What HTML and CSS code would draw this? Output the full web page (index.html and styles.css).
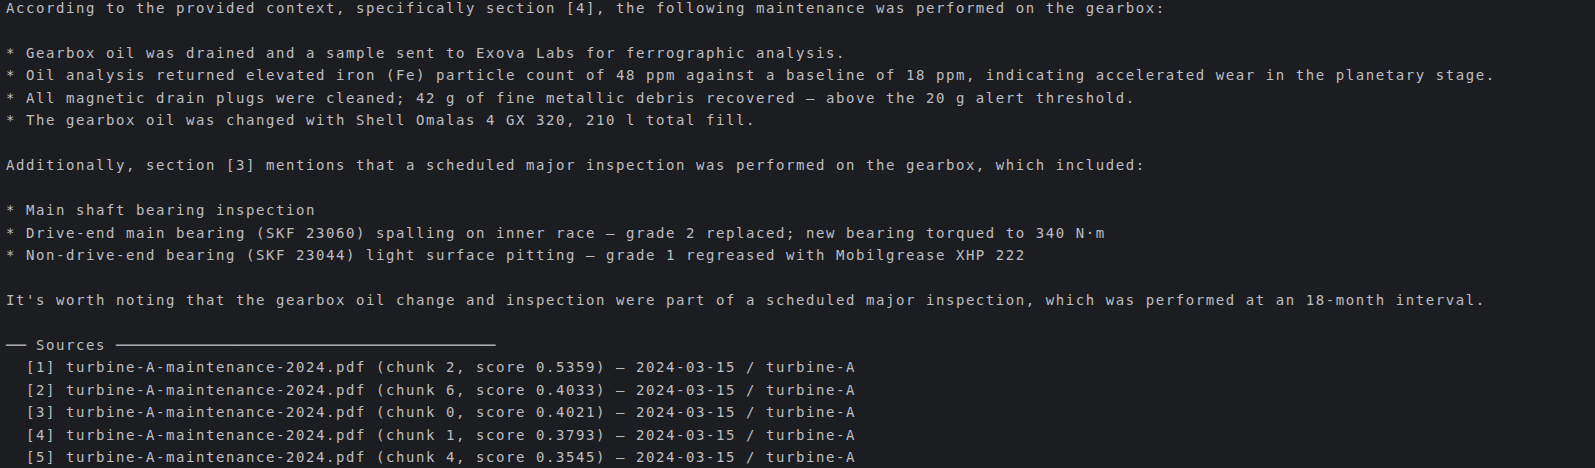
FILE: index.html
```html
<!DOCTYPE html>
<html lang="en">
<head>
<meta charset="utf-8">
<title>Terminal</title>
<link rel="stylesheet" href="styles.css">
</head>
<body>
<pre class="term">According to the provided context, specifically section [4], the following maintenance was performed on the gearbox:

* Gearbox oil was drained and a sample sent to Exova Labs for ferrographic analysis.
* Oil analysis returned elevated iron (Fe) particle count of 48 ppm against a baseline of 18 ppm, indicating accelerated wear in the planetary stage.
* All magnetic drain plugs were cleaned; 42 g of fine metallic debris recovered — above the 20 g alert threshold.
* The gearbox oil was changed with Shell Omalas 4 GX 320, 210 l total fill.

Additionally, section [3] mentions that a scheduled major inspection was performed on the gearbox, which included:

* Main shaft bearing inspection
* Drive-end main bearing (SKF 23060) spalling on inner race — grade 2 replaced; new bearing torqued to 340 N·m
* Non-drive-end bearing (SKF 23044) light surface pitting — grade 1 regreased with Mobilgrease XHP 222

It's worth noting that the gearbox oil change and inspection were part of a scheduled major inspection, which was performed at an 18-month interval.

<span class="rule">──</span> Sources <span class="rule">──────────────────────────────────────</span>
  [1] turbine-A-maintenance-2024.pdf (chunk 2, score 0.5359) — 2024-03-15 / turbine-A
  [2] turbine-A-maintenance-2024.pdf (chunk 6, score 0.4033) — 2024-03-15 / turbine-A
  [3] turbine-A-maintenance-2024.pdf (chunk 0, score 0.4021) — 2024-03-15 / turbine-A
  [4] turbine-A-maintenance-2024.pdf (chunk 1, score 0.3793) — 2024-03-15 / turbine-A
  [5] turbine-A-maintenance-2024.pdf (chunk 4, score 0.3545) — 2024-03-15 / turbine-A</pre>
</body>
</html>
```

FILE: styles.css
```css
html, body {
  margin: 0;
  padding: 0;
  background: #1c1d20;
  height: 100%;
  overflow: hidden;
}

.term {
  margin: -3px 0 0 0;
  padding: 0 0 0 6px;
  font-family: "DejaVu Sans Mono", "Liberation Mono", monospace;
  font-size: 14px;
  letter-spacing: 1.57px;
  line-height: 22.45px;
  color: #bcbec4;
  white-space: pre;
}

.rule {
  font-size: 16.6px;
  letter-spacing: 0;
  line-height: 0;
  color: #a9abb0;
  vertical-align: -1px;
}
```
